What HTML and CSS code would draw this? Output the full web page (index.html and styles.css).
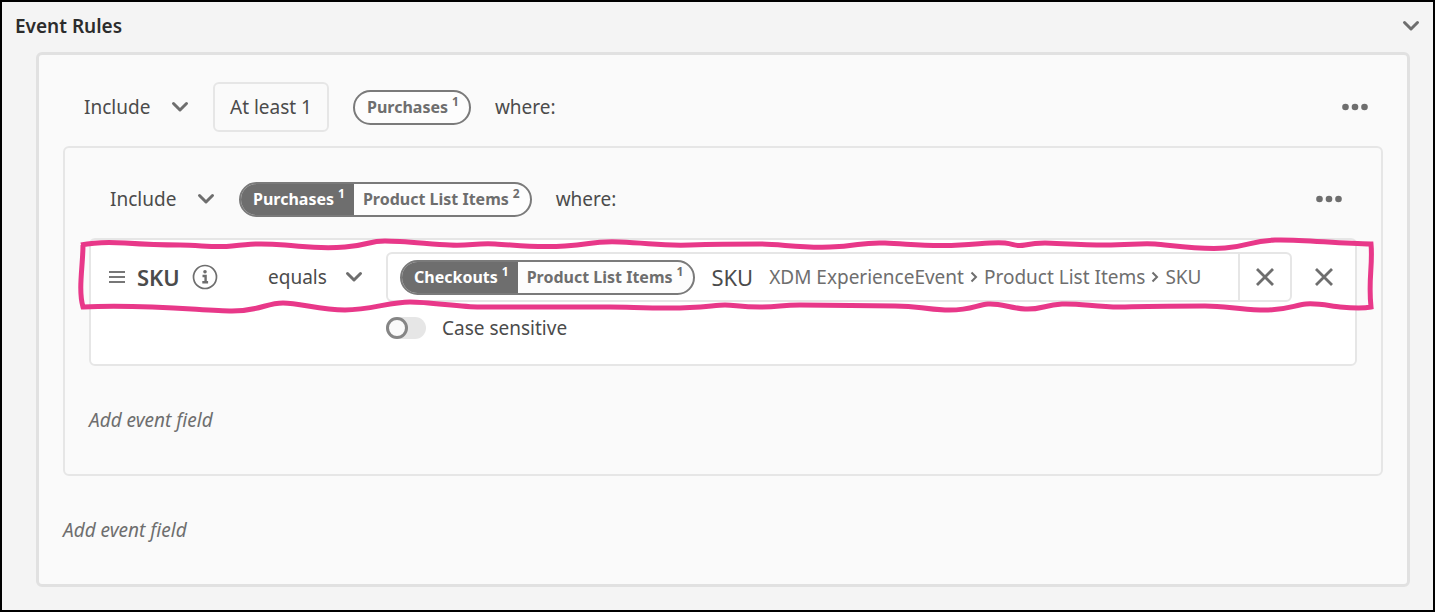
FILE: index.html
```
<!DOCTYPE html>
<html lang="en">
<head>
<meta charset="utf-8">
<title>Event Rules</title>
<link rel="stylesheet" href="styles.css">
</head>
<body>
<svg class="symbols" aria-hidden="true">
  <symbol id="chevron" viewBox="0 0 18 12"><path d="M2.500 2.500 9 9l6.500-6.500" fill="none" stroke="currentColor" stroke-width="3" stroke-linecap="round" stroke-linejoin="round"/></symbol>
  <symbol id="more" viewBox="0 0 26 8"><circle cx="3.500" cy="4" r="3.300"/><circle cx="13" cy="4" r="3.300"/><circle cx="22.500" cy="4" r="3.300"/></symbol>
  <symbol id="cross" viewBox="0 0 20 20"><path d="M2 2l16 16M18 2 2 18" fill="none" stroke="currentColor" stroke-width="2.800"/></symbol>
</svg>
<main class="page">
  <header class="header">
    <h1 class="title">Event Rules</h1>
    <button class="icon-button" type="button" aria-label="Collapse"><svg class="chevron"><use href="#chevron"/></svg></button>
  </header>

  <section class="panel">
    <div class="row">
      <div class="picker">
        <select class="select" aria-label="Purchases mode"><option>Include</option><option>Exclude</option></select>
        <svg class="chevron"><use href="#chevron"/></svg>
      </div>
      <button class="count" type="button">At least 1</button>
      <span class="pill"><span class="pill-part">Purchases<sup class="index">1</sup></span></span>
      <span class="where">where:</span>
      <button class="icon-button row-end" type="button" aria-label="More"><svg class="more"><use href="#more"/></svg></button>
    </div>

    <div class="group">
      <div class="row">
        <div class="picker">
          <select class="select" aria-label="Product list mode"><option>Include</option><option>Exclude</option></select>
          <svg class="chevron"><use href="#chevron"/></svg>
        </div>
        <span class="pill"><span class="pill-part pill-dark">Purchases<sup class="index">1</sup></span><span class="pill-part">Product List Items<sup class="index">2</sup></span></span>
        <span class="where">where:</span>
        <button class="icon-button row-end" type="button" aria-label="More"><svg class="more"><use href="#more"/></svg></button>
      </div>

      <div class="card">
        <div class="field">
          <svg class="grip" viewBox="0 0 16 14"><path d="M0 2h16M0 7h16M0 12h16" stroke="currentColor" stroke-width="1.700"/></svg>
          <strong class="field-name">SKU</strong>
          <svg class="info" viewBox="0 0 26 26"><circle cx="13" cy="13" r="11.500" fill="none" stroke="currentColor" stroke-width="1.700"/><circle cx="13" cy="7.800" r="1.800"/><path d="M10.500 12H13.600V18.200M10.300 18.200h5.800" fill="none" stroke="currentColor" stroke-width="2.400"/></svg>
        </div>
        <div class="picker">
          <select class="select" aria-label="Comparison"><option>equals</option><option>does not equal</option></select>
          <svg class="chevron"><use href="#chevron"/></svg>
        </div>
        <div class="value">
          <span class="pill"><span class="pill-part pill-dark">Checkouts<sup class="index">1</sup></span><span class="pill-part">Product List Items<sup class="index">1</sup></span></span>
          <span class="value-name">SKU</span>
          <span class="path">XDM ExperienceEvent<svg class="sep" viewBox="0 0 8 12"><path d="M1.500 1.500 6 6l-4.500 4.500"/></svg>Product List Items<svg class="sep" viewBox="0 0 8 12"><path d="M1.500 1.500 6 6l-4.500 4.500"/></svg>SKU</span>
          <button class="icon-button clear" type="button" aria-label="Clear value"><svg class="cross"><use href="#cross"/></svg></button>
        </div>
        <button class="icon-button" type="button" aria-label="Remove field"><svg class="cross"><use href="#cross"/></svg></button>
        <label class="case"><input class="switch" type="checkbox">Case sensitive</label>
        <svg class="marker" viewBox="76 236 1300 80" preserveAspectRatio="none" aria-hidden="true">
          <path d="M81 245C95 242 110 242 125 243S160 245 180 245S215 248 232 246S260 243 285 245S320 249 345 247S368 241 385 241S430 244 450 245S475 243 495 244S535 248 565 246S590 241 620 242S660 246 690 245S740 244 760 244S800 248 830 247S860 242 885 243S930 247 960 245S995 242 1005 243S1015 247 1025 245S1035 243 1045 243S1080 245 1105 245S1140 243 1155 244S1200 250 1225 248S1250 241 1275 240S1340 244 1371 244C1373 265 1368 280 1371 307C1362 309 1350 308 1340 307S1318 303 1306 304S1285 311 1260 310S1225 306 1205 306S1150 306 1125 307S1080 303 1062 304S1040 310 1025 309S1000 303 988 304S970 311 945 310S920 306 895 306S820 305 800 305S780 307 760 307S735 305 725 305S700 308 670 308S630 307 610 307S500 307 480 307S430 302 410 302S370 310 345 310S300 303 283 303S260 311 232 311S150 304 83 307C78 290 83 265 83 245"/>
        </svg>
      </div>

      <button class="add" type="button">Add event field</button>
    </div>

    <button class="add" type="button">Add event field</button>
  </section>
</main>
</body>
</html>
```
FILE: styles.css
```
*, *::before { box-sizing: border-box; }

body {
  margin: 0;
  color: #4b4b4b;
  font-family: "Noto Sans", "Open Sans", sans-serif;
  font-size: 19px;
  line-height: 28px;
}

button, select {
  padding: 0;
  border: 0;
  background: none;
  color: inherit;
  font: inherit;
}

svg { display: block; fill: currentColor; }
.symbols { position: absolute; width: 0; height: 0; }

.page {
  min-height: 100vh;
  padding: 0 23px 20px 34px;
  border: 2px solid #000;
  background: #f4f4f4;
}

.header {
  display: flex;
  align-items: center;
  justify-content: space-between;
  height: 50px;
  margin: 0 -10px 0 -21px;
  padding-bottom: 3px;
}

.title {
  margin: 0;
  color: #2c2c2c;
  font-size: 19px;
  font-weight: 600;
}

.icon-button {
  display: grid;
  place-items: center;
  color: #6e6e6e;
}

.chevron { width: 18px; height: 12px; color: #6e6e6e; }
.more { width: 26px; height: 8px; }
.cross { width: 20px; height: 20px; }

.panel {
  padding: 27px 24px 40px;
  border: 3px solid #e1e1e1;
  border-radius: 6px;
  background: #fafafa;
}

.row {
  display: flex;
  align-items: center;
  gap: 24px;
  height: 50px;
  margin-bottom: 14px;
  padding: 0 15px 0 21px;
}
.row-end { margin-left: auto; }

.picker { display: grid; align-items: center; width: 105px; }
.picker > * { grid-area: 1 / 1; }
.picker .chevron { justify-self: end; pointer-events: none; }
.select { width: 100%; appearance: none; }

.count {
  height: 50px;
  padding: 0 15px;
  border: 2px solid #e6e6e6;
  border-radius: 6px;
}

.pill {
  display: flex;
  height: 35px;
  overflow: hidden;
  border: 2px solid #7a7a7a;
  border-radius: 18px;
  background: #fdfdfd;
  color: #6e6e6e;
  font-size: 16px;
  font-weight: 700;
  white-space: nowrap;
}
.pill-part { display: flex; align-items: center; gap: 4px; padding: 0 10px 0 9px; }
.pill-part:first-child { padding-left: 12px; }
.pill-dark { padding-right: 9px; background: #6e6e6e; color: #fff; }
.index { align-self: flex-start; font-size: 12px; line-height: 20px; }

.group {
  padding: 26px 24px 40px;
  border: 2px solid #e6e6e6;
  border-radius: 6px;
}

.card {
  position: relative;
  display: grid;
  grid-template-columns: 137px 96px 1fr 20px;
  align-items: center;
  column-gap: 22px;
  padding: 12px 21px 22px 18px;
  border: 2px solid #e6e6e6;
  border-radius: 6px;
  background: #fff;
}
.card .picker { width: 95px; }

.field { display: flex; align-items: center; gap: 12px; }
.grip { width: 16px; height: 14px; }
.field-name { font-size: 22px; font-weight: 600; }
.info { width: 26px; height: 26px; color: #6e6e6e; }

.value {
  display: flex;
  align-items: center;
  height: 50px;
  padding-left: 12px;
  border: 2px solid #e6e6e6;
  border-radius: 6px;
  white-space: nowrap;
}
.value-name { margin: 0 16px; font-size: 22px; }
.path { display: flex; align-items: center; gap: 6px; color: #6e6e6e; }
.sep { width: 8px; height: 12px; fill: none; stroke: currentColor; stroke-width: 2; }
.clear {
  align-self: stretch;
  width: 52px;
  margin-left: auto;
  border-left: 2px solid #e6e6e6;
}

.case {
  display: flex;
  grid-column: 3;
  align-items: center;
  gap: 16px;
  margin-top: 12px;
}
.switch {
  width: 40px;
  height: 22px;
  margin: 0;
  border-radius: 11px;
  background: #e6e6e6;
  appearance: none;
}
.switch::before {
  content: "";
  display: block;
  width: 22px;
  height: 22px;
  border: 3px solid #858585;
  border-radius: 50%;
  background: #fafafa;
}

.marker {
  position: absolute;
  top: -4px;
  left: -15px;
  width: calc(100% + 36px);
  height: 80px;
  fill: none;
  stroke: #e83889;
  stroke-width: 5;
  pointer-events: none;
}

.add {
  display: block;
  margin-top: 40px;
  color: #6e6e6e;
  font-style: italic;
}
```
